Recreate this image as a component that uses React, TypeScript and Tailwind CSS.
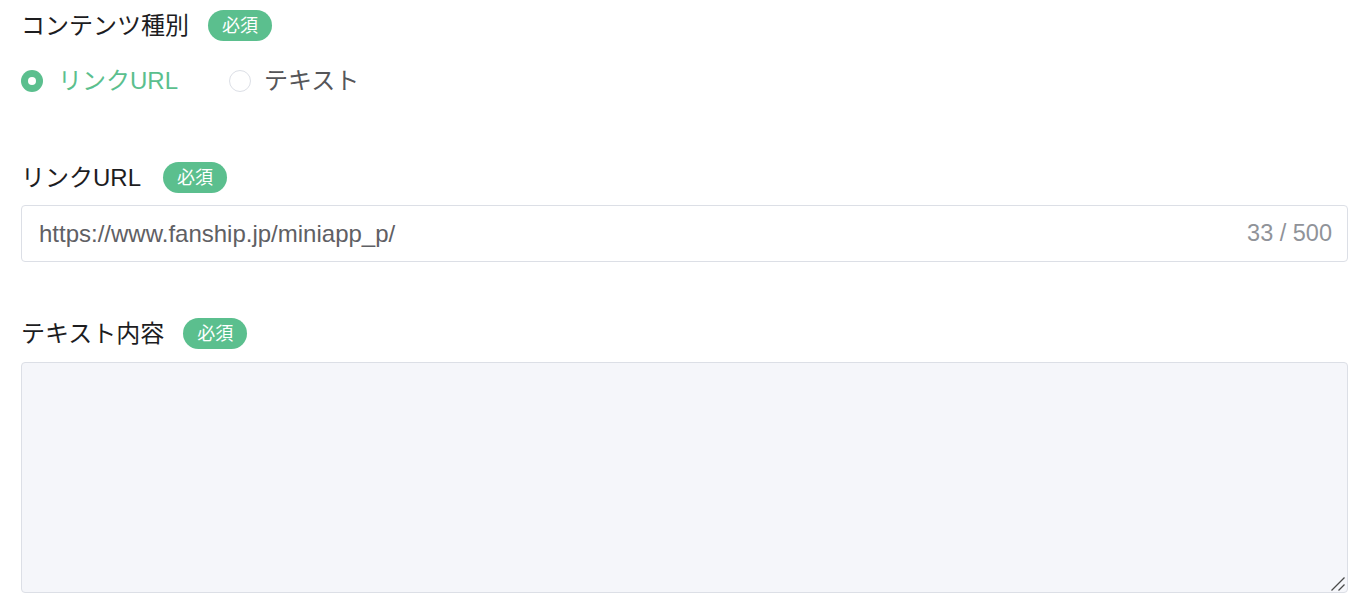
import React from "react";

const FONT = '"Liberation Sans", "Noto Sans CJK JP", sans-serif';

function Badge() {
  return (
    <span className="inline-flex items-center justify-center w-[64px] h-[31px] rounded-full bg-[#5bbf8e] text-white text-[18px] leading-none">
      必須
    </span>
  );
}

export default function App() {
  return (
    <div className="bg-white w-[1366px] h-[610px] overflow-hidden pl-[21px] pr-[18px] pt-[10px]" style={{ fontFamily: FONT }}>
      <div className="flex items-center h-[31px]">
        <span className="text-[24px] leading-none text-[#1d1d1f]">コンテンツ種別</span>
        <span className="ml-[19px]"><Badge /></span>
      </div>

      <div className="flex items-center h-[24px] mt-[28px]">
        <label className="flex items-center">
          <span className="w-[22px] h-[22px] rounded-full bg-[#5bbf8e] flex items-center justify-center">
            <span className="w-[8px] h-[8px] rounded-full bg-white" />
          </span>
          <span className="ml-[15px] text-[24px] leading-none text-[#5bbf8e]">リンクURL</span>
        </label>
        <label className="flex items-center ml-[51px]">
          <span className="w-[22px] h-[22px] rounded-full border border-[#dcdfe6] bg-white" />
          <span className="ml-[13px] text-[24px] leading-none text-[#555659]">テキスト</span>
        </label>
      </div>

      <div className="flex items-center h-[31px] mt-[69px]">
        <span className="text-[24px] leading-none text-[#1d1d1f]">リンクURL</span>
        <span className="ml-[22px]"><Badge /></span>
      </div>

      <div className="relative mt-[12px] h-[57px]">
        <input
          readOnly
          defaultValue="https://www.fanship.jp/miniapp_p/"
          className="w-full h-full rounded-[4px] border border-[#dcdfe6] bg-white pl-[17px] pr-[110px] text-[24px] text-[#5f6064] outline-none"
          style={{ fontFamily: FONT }}
        />
        <span className="absolute right-[16px] top-0 h-full flex items-center text-[23.5px] text-[#909399]">33 / 500</span>
      </div>

      <div className="flex items-center h-[31px] mt-[56px]">
        <span className="text-[24px] leading-none text-[#1d1d1f]">テキスト内容</span>
        <span className="ml-[19px]"><Badge /></span>
      </div>

      <div className="relative mt-[13px] h-[231px]">
        <textarea
          className="block w-full h-full resize-none rounded-[4px] border border-[#dcdfe6] bg-[#f5f6fa] outline-none"
        />
        <svg className="absolute right-[2px] bottom-[1px]" width="16" height="16" viewBox="0 0 16 16">
          <line x1="1.5" y1="14.5" x2="14.5" y2="1.5" stroke="#4a4a4a" strokeWidth="1.3" />
          <line x1="8.5" y1="14.5" x2="14.5" y2="8.5" stroke="#4a4a4a" strokeWidth="1.3" />
        </svg>
      </div>
    </div>
  );
}
